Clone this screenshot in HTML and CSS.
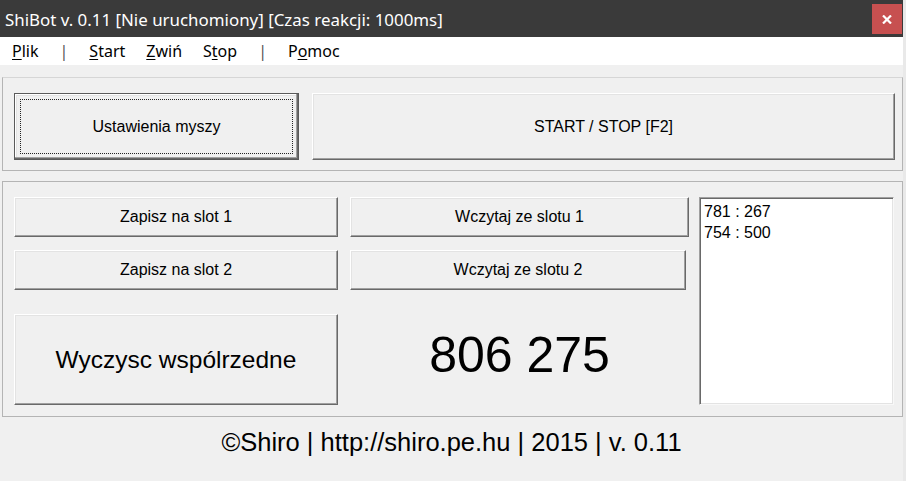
FILE: index.html
```html
<!DOCTYPE html>
<html lang="pl">
<head>
<meta charset="utf-8">
<title>ShiBot</title>
<link rel="stylesheet" href="styles.css">
</head>
<body>
<div class="window">
  <div class="titlebar">
    <span class="title">ShiBot v. 0.11 [Nie uruchomiony] [Czas reakcji: 1000ms]</span>
    <div class="close">
      <svg width="10" height="9" viewBox="0 0 10 9"><path d="M1 0.5 L9 8.5 M9 0.5 L1 8.5" stroke="#fff" stroke-width="2.2" fill="none"/></svg>
    </div>
  </div>
  <div class="menubar">
    <span class="mi"><u>P</u>lik</span>
    <span class="mi sep">|</span>
    <span class="mi"><u>S</u>tart</span>
    <span class="mi"><u>Z</u>wiń</span>
    <span class="mi">S<u>t</u>op</span>
    <span class="mi sep">|</span>
    <span class="mi">P<u>o</u>moc</span>
  </div>
  <div class="content">
    <div class="panel panel-top">
      <div class="btn btn-default"><span class="focus">Ustawienia myszy</span></div>
      <div class="btn btn-start">START / STOP [F2]</div>
    </div>
    <div class="panel panel-main">
      <div class="btn z1">Zapisz na slot 1</div>
      <div class="btn w1">Wczytaj ze slotu 1</div>
      <div class="btn z2">Zapisz na slot 2</div>
      <div class="btn w2">Wczytaj ze slotu 2</div>
      <div class="btn clear">Wyczysc wspólrzedne</div>
      <div class="coords">806 275</div>
      <div class="list">
        <div class="item">781 : 267</div>
        <div class="item">754 : 500</div>
      </div>
    </div>
    <div class="footer">©Shiro | http://shiro.pe.hu | 2015 | v. 0.11</div>
  </div>
</div>
</body>
</html>
```

FILE: styles.css
```css
html, body {
  margin: 0;
  padding: 0;
}
body {
  width: 906px;
  height: 481px;
  overflow: hidden;
  background: #e9e9e9;
  font-family: "Liberation Sans", Arial, sans-serif;
}
.window {
  width: 903px;
  height: 481px;
  background: #f0f0f0;
  display: flex;
  flex-direction: column;
}
.titlebar {
  height: 37px;
  background: #3a3a3a;
  display: flex;
  justify-content: space-between;
  align-items: flex-start;
  flex: none;
}
.title {
  color: #fff;
  font-family: "Noto Sans", "Open Sans", sans-serif;
  font-size: 16.9px;
  line-height: 34px;
  padding-top: 3px;
  padding-left: 5px;
  white-space: nowrap;
}
.close {
  width: 30px;
  height: 30px;
  margin-top: 4px;
  margin-right: 1px;
  background: #c75050;
  display: flex;
  align-items: center;
  justify-content: center;
}
.menubar {
  height: 27px;
  background: #fff;
  display: flex;
  gap: 21px;
  padding-left: 12px;
  font-family: "Noto Sans", "Open Sans", sans-serif;
  font-size: 16px;
  line-height: 27px;
  padding-top: 1px;
  color: #000;
  flex: none;
}
.mi u {
  text-decoration: underline;
  text-decoration-thickness: 1px;
  text-underline-offset: 2px;
}
.sep {
  color: #555;
}
.content {
  flex: 1;
  display: flex;
  flex-direction: column;
  padding-top: 12px;
}
.panel {
  margin-left: 2px;
  width: 901px;
  box-sizing: border-box;
  border: 1px solid #b4b4b4;
  padding: 15px 7px 10px 11px;
}
.panel-top {
  display: flex;
  gap: 13px;
  height: 94px;
  border-top-color: #d6d6d6;
}
.panel-main {
  margin-top: 10px;
  display: grid;
  grid-template-columns: 324px 12px 339px 10px 195px;
  grid-template-rows: 40px 13px 40px 24px 91px;
  height: 236px;
}
.btn {
  box-sizing: border-box;
  background: #f0f0f0;
  border: 1px solid;
  border-color: #fff #696969 #696969 #fff;
  box-shadow: inset -1px -1px #a0a0a0, inset 1px 1px #e3e3e3;
  font-size: 16px;
  color: #000;
  display: flex;
  align-items: center;
  justify-content: center;
  white-space: nowrap;
}
.btn-default {
  width: 285px;
  flex: none;
  border: 1px solid #5a5a5a;
  box-shadow: inset -1px -1px #696969, inset -2px -2px #a0a0a0, inset 1px 1px #fff, inset 2px 2px #e3e3e3;
  padding: 5px;
  align-items: stretch;
}
.focus {
  flex: 1;
  border: 1px dotted #222;
  display: flex;
  align-items: center;
  justify-content: center;
}
.btn-start {
  flex: 1;
}
.z1 { grid-column: 1; grid-row: 1; }
.w1 { grid-column: 3; grid-row: 1; }
.z2 { grid-column: 1; grid-row: 3; }
.w2 { grid-column: 3; grid-row: 3; width: 336px; }
.clear {
  grid-column: 1;
  grid-row: 5;
  font-size: 24.5px;
}
.coords {
  grid-column: 3;
  grid-row: 5;
  display: flex;
  align-items: center;
  justify-content: center;
  font-size: 50px;
  padding-bottom: 9px;
  color: #000;
}
.list {
  grid-column: 5;
  grid-row: 1 / 6;
  box-sizing: border-box;
  background: #fff;
  border: 1px solid;
  border-color: #a0a0a0 #f8f8f8 #f8f8f8 #a0a0a0;
  box-shadow: inset 1px 1px #696969, inset -1px -1px #e3e3e3;
  padding: 3px 4px;
  font-size: 16px;
  line-height: 21px;
  color: #000;
}
.footer {
  flex: 1;
  text-align: center;
  font-size: 25.5px;
  line-height: 30px;
  padding-top: 10px;
  color: #000;
  white-space: nowrap;
}
```
